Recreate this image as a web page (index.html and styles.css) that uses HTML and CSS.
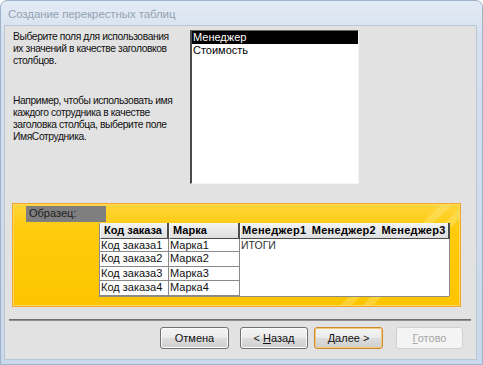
FILE: index.html
```html
<!DOCTYPE html>
<html lang="ru">
<head>
<meta charset="utf-8">
<title>Создание перекрестных таблиц</title>
<link rel="stylesheet" href="styles.css">
</head>
<body>
<div class="window">
  <div class="titlebar">Создание перекрестных таблиц</div>
  <div class="client">
    <div class="top">
      <div class="desc">
        <p>Выберите поля для использования<br>их значений в качестве заголовков<br>столбцов.</p>
        <p>Например, чтобы использовать имя<br>каждого сотрудника в качестве<br>заголовка столбца, выберите поле<br>ИмяСотрудника.</p>
      </div>
      <div class="listbox">
        <div class="item selected">Менеджер</div>
        <div class="item">Стоимость</div>
      </div>
    </div>
    <div class="sample">
      <div class="sample-label">Образец:</div>
      <div class="grid">
        <div class="hcell">Код заказа</div>
        <div class="hcell">Марка</div>
        <div class="hcell hwide">Менеджер1 Менеджер2 Менеджер3</div>
        <div class="cell">Код заказа1</div>
        <div class="cell">Марка1</div>
        <div class="totals">ИТОГИ</div>
        <div class="cell">Код заказа2</div>
        <div class="cell">Марка2</div>
        <div class="cell">Код заказа3</div>
        <div class="cell">Марка3</div>
        <div class="cell">Код заказа4</div>
        <div class="cell">Марка4</div>
      </div>
    </div>
    <div class="separator"></div>
    <div class="buttons">
      <button class="btn">Отмена</button>
      <button class="btn back">&lt; <u>Н</u>азад</button>
      <button class="btn default"><u>Д</u>алее &gt;</button>
      <button class="btn disabled"><u>Г</u>отово</button>
    </div>
  </div>
</div>
</body>
</html>
```
FILE: styles.css
```css
* { box-sizing: border-box; }
html, body {
  margin: 0;
  padding: 0;
  background: #ffffff;
}
body {
  font-family: "Liberation Sans", Arial, sans-serif;
  font-size: 11px;
  color: #000;
}
.window {
  width: 483px;
  height: 365px;
  border: 1px solid #9fb2c9;
  border-radius: 7px 7px 0 0;
  background: linear-gradient(180deg, #e3ebf5 0%, #d5e1ef 10%, #c9d8ea 100%);
  display: flex;
  flex-direction: column;
  overflow: hidden;
}
.titlebar {
  height: 24px;
  padding: 7px 0 0 7px;
  font-size: 11.5px;
  color: #96a2b1;
  letter-spacing: -0.1px;
}
.client {
  margin: 0 5px 4px 3px;
  flex: 1;
  background: #e2e2e2;
  border: 1px solid #b8c6d6;
  padding: 4px 8px 0 8px;
  display: flex;
  flex-direction: column;
}
.top {
  display: flex;
  height: 154px;
}
.desc {
  width: 177px;
  padding-top: 1px;
  line-height: 12px;
  color: #111;
  font-size: 10.3px;
  letter-spacing: -0.4px;
  white-space: nowrap;
}
.desc p {
  margin: 0 0 28px 0;
}
.listbox {
  width: 169px;
  height: 154px;
  background: #fff;
  border-left: 2px solid #4a4a4a;
  border-top: 1px solid #6a6a6a;
  border-right: 1px solid #f4f4f4;
  border-bottom: 1px solid #f4f4f4;
}
.item {
  height: 13px;
  line-height: 13px;
  padding-left: 1px;
  white-space: nowrap;
}
.item.selected {
  background: #000;
  color: #fff;
}
.sample {
  margin: 19px 0 0 -1px;
  width: 449px;
  height: 104px;
  border: 1px solid #f2a62c;
  background:
    linear-gradient(135deg, transparent 0 78%, rgba(255,235,140,0.35) 78% 80%, transparent 80% 82%, rgba(255,235,140,0.35) 82% 84%, transparent 84%),
    linear-gradient(180deg, #ffd53a 0%, #ffcb0c 25%, #fdc500 100%);
  box-shadow: inset 0 0 0 1px #ffd860;
  padding: 2px 0 0 13px;
}
.sample-label {
  width: 80px;
  height: 16px;
  line-height: 15px;
  background: #7f7f7f;
  color: #1e1e1e;
  padding-left: 3px;
}
.grid {
  margin: 1px 0 0 73px;
  width: 350px;
  display: grid;
  grid-template-columns: 69px 71px 210px;
  grid-template-rows: 16px 13px 15px 14px 15px;
  background: #fff;
  border-left: 1px solid #8a8a8a;
  border-bottom: 1px solid #8a8a8a;
}
.hcell {
  background: linear-gradient(180deg, #f4f4f4, #dedede);
  border-right: 2px solid #4c4c4c;
  border-bottom: 1px solid #4c4c4c;
  border-left: 1px solid #fafafa;
  font-weight: bold;
  line-height: 15px;
  padding-left: 3px;
  white-space: nowrap;
  overflow: hidden;
}
.hcell.hwide {
  padding-left: 1px;
  letter-spacing: 0.3px;
  word-spacing: 2px;
}
.cell {
  border-right: 1px solid #8a8a8a;
  border-bottom: 1px solid #8a8a8a;
  line-height: 13px;
  padding-left: 1px;
  color: #111;
  white-space: nowrap;
}
.totals {
  grid-column: 3;
  grid-row: 2 / span 4;
  border-right: 1px solid #8a8a8a;
  padding-left: 1px;
  line-height: 12px;
  color: #333;
  font-size: 10.5px;
}
.separator {
  margin: 12px 0 0 -4px;
  width: 462px;
  height: 2px;
  background: #6e6e6e;
  border-bottom: 1px solid #8f8f8f;
}
.buttons {
  display: flex;
  margin-top: 6px;
  padding-left: 147px;
}
.btn {
  width: 69px;
  height: 22px;
  font-family: "Liberation Sans", Arial, sans-serif;
  font-size: 11px;
  color: #111;
  border: 1px solid #707070;
  border-radius: 3px;
  background: linear-gradient(180deg, #f4f4f4 0%, #ebebeb 48%, #dcdcdc 52%, #cfcfcf 100%);
  box-shadow: inset 0 0 0 1px #fbfbfb;
  padding: 0;
}
.btn u { text-decoration: underline; }
.btn.back { margin-left: 11px; width: 68px; }
.btn.default {
  margin-left: 6px;
  border-color: #cf8a2e;
  box-shadow: inset 0 0 0 1px #f6c87a;
}
.btn.disabled {
  margin-left: 13px;
  width: 67px;
  border-color: #d0d0d0;
  background: #f4f4f4;
  box-shadow: none;
  color: #a6a6a6;
}
```
